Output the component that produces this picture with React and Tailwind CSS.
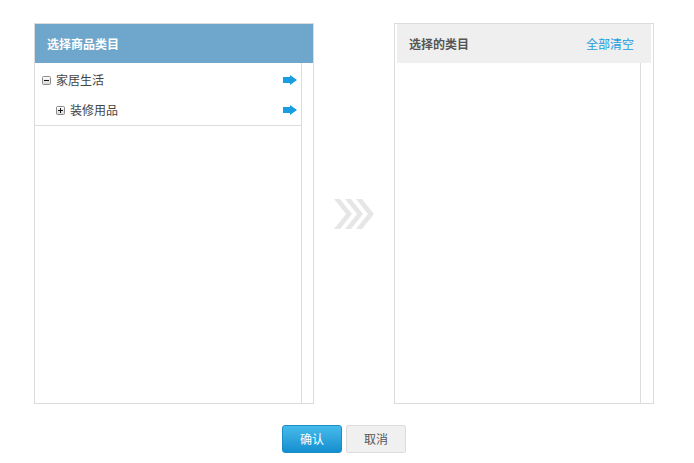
import React from "react";

const font = "font-['Microsoft_YaHei','Noto_Sans_CJK_SC',sans-serif]";

function ToggleBox({ open }) {
  return (
    <svg width="9" height="9" viewBox="0 0 9 9" className="shrink-0">
      <defs>
        <linearGradient id={open ? "tg-o" : "tg-c"} x1="0" y1="0" x2="0" y2="1">
          <stop offset="0" stopColor="#ffffff" />
          <stop offset="1" stopColor="#d6d6d6" />
        </linearGradient>
      </defs>
      <rect x="0.5" y="0.5" width="8" height="8" rx="1" fill={`url(#${open ? "tg-o" : "tg-c"})`} stroke="#8a8a8a" />
      <rect x="2" y="4" width="5" height="1" fill="#111" />
      {!open && <rect x="4" y="2" width="1" height="5" fill="#111" />}
    </svg>
  );
}

function PickArrow() {
  return (
    <svg width="14" height="10" viewBox="0 0 14 10" className="shrink-0">
      <path d="M0 2h7V0l7 5-7 5V8H0z" fill="#1a9de0" />
    </svg>
  );
}

function Chevrons() {
  return (
    <svg width="40" height="30" viewBox="0 0 40 30">
      {[0, 11, 22].map((dx) => (
        <polygon
          key={dx}
          points={`${dx},0 ${dx + 6},0 ${dx + 18},15 ${dx + 6},30 ${dx},30 ${dx + 12},15`}
          fill="#e6e6e6"
        />
      ))}
    </svg>
  );
}

const tree = [
  { name: "家居生活", level: 0, open: true },
  { name: "装修用品", level: 1, open: false },
];

export default function App() {
  return (
    <div className={`w-[694px] h-[463px] bg-white pt-[23px] pl-[34px] ${font}`}>
      <div className="flex">
        {/* category tree */}
        <div className="w-[280px] h-[381px] border border-[#dcdcdc] flex flex-col">
          <div className="h-[39px] bg-[#6ea7cb] text-white text-[12px] font-bold pl-3 flex items-center">
            选择商品类目
          </div>
          <div className="flex-1 flex">
            <div className="flex-1 border-r border-[#dcdcdc]">
              <div className="pt-[2px] border-b border-[#dcdcdc]">
                {tree.map((item) => (
                  <div
                    key={item.name}
                    className={`h-[30px] flex items-center pr-[4px] ${item.level ? "pl-[21px]" : "pl-[7px]"}`}
                  >
                    <ToggleBox open={item.open} />
                    <span className="ml-[5px] text-[12px] text-[#444] flex-1">{item.name}</span>
                    <PickArrow />
                  </div>
                ))}
              </div>
            </div>
            <div className="w-[11px]" />
          </div>
        </div>

        <div className="w-[80px] h-[381px] flex items-center justify-center">
          <Chevrons />
        </div>

        {/* selected categories */}
        <div className="w-[260px] h-[381px] border border-[#dcdcdc] px-px flex flex-col">
          <div className="h-[39px] mx-px bg-[#efefef] pl-3 pr-[17px] flex items-center justify-between text-[12px]">
            <span className="font-bold text-[#555]">选择的类目</span>
            <span className="text-[#1a9de0] cursor-pointer">全部清空</span>
          </div>
          <div className="flex-1 flex">
            <div className="flex-1 border-r border-[#dcdcdc]" />
            <div className="w-[11px]" />
          </div>
        </div>
      </div>

      <div className="w-[620px] mt-[21px] flex justify-center gap-1">
        <button className="w-[60px] h-[28px] rounded-[3px] border border-[#1b8cc6] bg-linear-to-b from-[#45bbeb] to-[#138fd0] text-white text-[12px]">
          确认
        </button>
        <button className="w-[60px] h-[28px] rounded-[2px] border border-[#dddddd] bg-[#f0f0f0] text-[#555] text-[12px]">
          取消
        </button>
      </div>
    </div>
  );
}
